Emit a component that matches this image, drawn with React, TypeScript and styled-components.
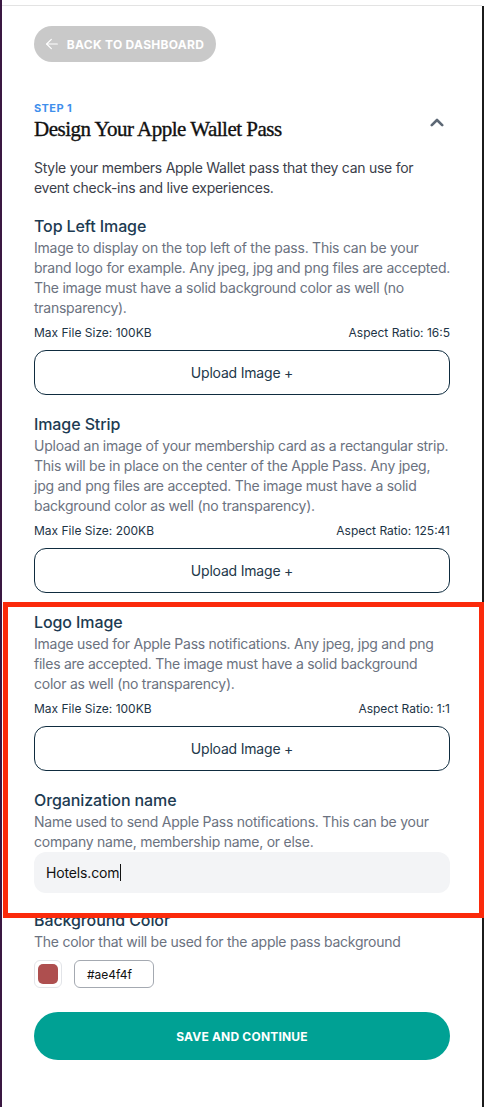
import * as React from "react";
import styled, { createGlobalStyle } from "styled-components";

const GlobalStyle = createGlobalStyle`
  html, body {
    margin: 0;
    padding: 0;
    background: #ffffff;
  }
  body {
    font-family: Inter, "Noto Sans", "Liberation Sans", sans-serif;
    -webkit-font-smoothing: antialiased;
  }
`;

const Frame = styled.div`
  position: relative;
  display: flex;
  min-height: 1107px;
  width: 484px;
  overflow: hidden;
`;

const LeftEdge = styled.div`
  width: 2px;
  background: #3a1842;
  flex-shrink: 0;
`;

const RightEdge = styled.div`
  width: 2px;
  margin-top: 6px;
  background: #1b1b1b;
  flex-shrink: 0;
`;

const Panel = styled.div`
  flex: 1;
  display: flex;
  flex-direction: column;
`;

const TopRule = styled.div`
  height: 5px;
  border-bottom: 1px solid #e3e3e3;
`;

const Content = styled.div`
  padding: 20px 32px 0 32px;
  display: flex;
  flex-direction: column;
`;

const BackButton = styled.button`
  align-self: flex-start;
  height: 36px;
  width: 182px;
  border: none;
  border-radius: 18px;
  background: #c9c9c9;
  color: #ffffff;
  display: flex;
  align-items: center;
  justify-content: center;
  gap: 7px;
  font-family: Inter, "Liberation Sans", sans-serif;
  font-size: 12px;
  font-weight: 700;
  letter-spacing: 0.3px;
  text-transform: uppercase;
  padding: 0 10px 0 8px;
`;

const StepHeader = styled.div`
  margin-top: 38px;
  display: flex;
  align-items: flex-start;
  justify-content: space-between;
`;

const StepLabel = styled.div`
  font-size: 11px;
  line-height: 16px;
  font-weight: 700;
  letter-spacing: 0.4px;
  color: #3f8fec;
`;

const Title = styled.h1`
  margin: 0;
  font-family: "Liberation Serif", "DejaVu Serif", serif;
  font-weight: 400;
  font-size: 21px;
  line-height: 26px;
  letter-spacing: -0.5px;
  color: #111111;
  -webkit-text-stroke: 0.35px #111111;
`;

const Chevron = styled.span`
  display: flex;
  margin-top: 18px;
  margin-right: 6px;
  color: #5d6875;
`;

const Intro = styled.p`
  margin: 16px 0 0 0;
  font-size: 14px;
  line-height: 20px;
  letter-spacing: -0.27px;
  color: #3b404a;
`;

const Section = styled.section<{ gap: number }>`
  margin-top: ${p => p.gap}px;
  display: flex;
  flex-direction: column;
`;

const Heading = styled.h2`
  margin: 0;
  font-size: 16px;
  line-height: 24px;
  font-weight: 500;
  letter-spacing: -0.1px;
  color: #1d3b52;
`;

const Description = styled.p`
  margin: 0;
  font-size: 14px;
  line-height: 20px;
  letter-spacing: -0.25px;
  color: #6b7280;
`;

const MetaRow = styled.div`
  margin-top: 7px;
  display: flex;
  justify-content: space-between;
  font-size: 12px;
  line-height: 16px;
  color: #1d3446;
`;

const UploadButton = styled.button`
  margin-top: 9px;
  height: 45px;
  width: 100%;
  background: #ffffff;
  border: 1px solid #0f2c3f;
  border-radius: 12px;
  font-family: Inter, "Liberation Sans", sans-serif;
  font-size: 14px;
  letter-spacing: -0.2px;
  color: #23384a;
`;

const TextInput = styled.div`
  height: 41px;
  border-radius: 12px;
  background: #f3f4f6;
  display: flex;
  align-items: center;
  padding: 0 12px;
  font-size: 14px;
  letter-spacing: -0.15px;
  color: #111111;
`;

const Caret = styled.span`
  display: inline-block;
  width: 1px;
  height: 17px;
  background: #111111;
  margin-left: 1px;
`;

const ColorRow = styled.div`
  margin-top: 8px;
  display: flex;
  align-items: center;
  gap: 12px;
`;

const Swatch = styled.div<{ color: string }>`
  width: 28px;
  height: 28px;
  box-sizing: border-box;
  border: 1px solid #e2e4e8;
  border-radius: 6px;
  padding: 3px;
  display: flex;
  & > span {
    flex: 1;
    border-radius: 5px;
    background: ${p => p.color};
  }
`;

const HexInput = styled.div`
  width: 80px;
  height: 28px;
  box-sizing: border-box;
  border: 1px solid #a4a9b1;
  border-radius: 6px;
  display: flex;
  align-items: center;
  padding-left: 12px;
  font-size: 12px;
  color: #111111;
`;

const SaveButton = styled.button`
  margin-top: 24px;
  height: 48px;
  width: 100%;
  border: none;
  border-radius: 24px;
  background: #00a194;
  color: #ffffff;
  font-family: Inter, "Liberation Sans", sans-serif;
  font-size: 12px;
  font-weight: 700;
  letter-spacing: 0.2px;
  text-transform: uppercase;
`;

const Highlight = styled.div`
  position: absolute;
  left: 3px;
  top: 602px;
  width: 481px;
  height: 316px;
  box-sizing: border-box;
  border: 5px solid #fb2a0b;
  pointer-events: none;
`;

type Upload = {
  title: string;
  text: string;
  size: string;
  ratio: string;
  gap: number;
};

const uploads: Upload[] = [
  {
    title: "Top Left Image",
    text:
      "Image to display on the top left of the pass. This can be your brand logo for example. Any jpeg, jpg and png files are accepted. The image must have a solid background color as well (no transparency).",
    size: "100KB",
    ratio: "16:5",
    gap: 16
  },
  {
    title: "Image Strip",
    text:
      "Upload an image of your membership card as a rectangular strip. This will be in place on the center of the Apple Pass. Any jpeg, jpg and png files are accepted. The image must have a solid background color as well (no transparency).",
    size: "200KB",
    ratio: "125:41",
    gap: 17
  },
  {
    title: "Logo Image",
    text:
      "Image used for Apple Pass notifications. Any jpeg, jpg and png files are accepted. The image must have a solid background color as well (no transparency).",
    size: "100KB",
    ratio: "1:1",
    gap: 17
  }
];

const ArrowLeft = () => (
  <svg width="16" height="16" viewBox="0 0 24 24" fill="none" stroke="currentColor" strokeWidth="1.8" strokeLinecap="round" strokeLinejoin="round">
    <path d="M20 12H4" />
    <path d="M11 19l-7-7 7-7" />
  </svg>
);

const ChevronUp = () => (
  <svg width="14" height="9" viewBox="0 0 14 9" fill="none" stroke="currentColor" strokeWidth="2.6" strokeLinecap="round" strokeLinejoin="round">
    <path d="M1.8 7.2L7 2l5.2 5.2" />
  </svg>
);

export default function App() {
  return (
    <>
      <GlobalStyle />
      <Frame>
        <LeftEdge />
        <Panel>
          <TopRule />
          <Content>
            <BackButton>
              <ArrowLeft />
              Back to dashboard
            </BackButton>

            <StepHeader>
              <div>
                <StepLabel>STEP 1</StepLabel>
                <Title>Design Your Apple Wallet Pass</Title>
              </div>
              <Chevron>
                <ChevronUp />
              </Chevron>
            </StepHeader>

            <Intro>
              Style your members Apple Wallet pass that they can use for event
              check-ins and live experiences.
            </Intro>

            {uploads.map(u => (
              <Section key={u.title} gap={u.gap}>
                <Heading>{u.title}</Heading>
                <Description>{u.text}</Description>
                <MetaRow>
                  <span>Max File Size: {u.size}</span>
                  <span>Aspect Ratio: {u.ratio}</span>
                </MetaRow>
                <UploadButton>Upload Image +</UploadButton>
              </Section>
            ))}

            <Section gap={17}>
              <Heading>Organization name</Heading>
              <Description>
                Name used to send Apple Pass notifications. This can be your
                company name, membership name, or else.
              </Description>
              <TextInput>
                Hotels.com
                <Caret />
              </TextInput>
            </Section>

            <Section gap={15}>
              <Heading>Background Color</Heading>
              <Description>
                The color that will be used for the apple pass background
              </Description>
              <ColorRow>
                <Swatch color="#ae4f4f">
                  <span />
                </Swatch>
                <HexInput>#ae4f4f</HexInput>
              </ColorRow>
            </Section>

            <SaveButton>Save and continue</SaveButton>
          </Content>
        </Panel>
        <RightEdge />
        <Highlight />
      </Frame>
    </>
  );
}
